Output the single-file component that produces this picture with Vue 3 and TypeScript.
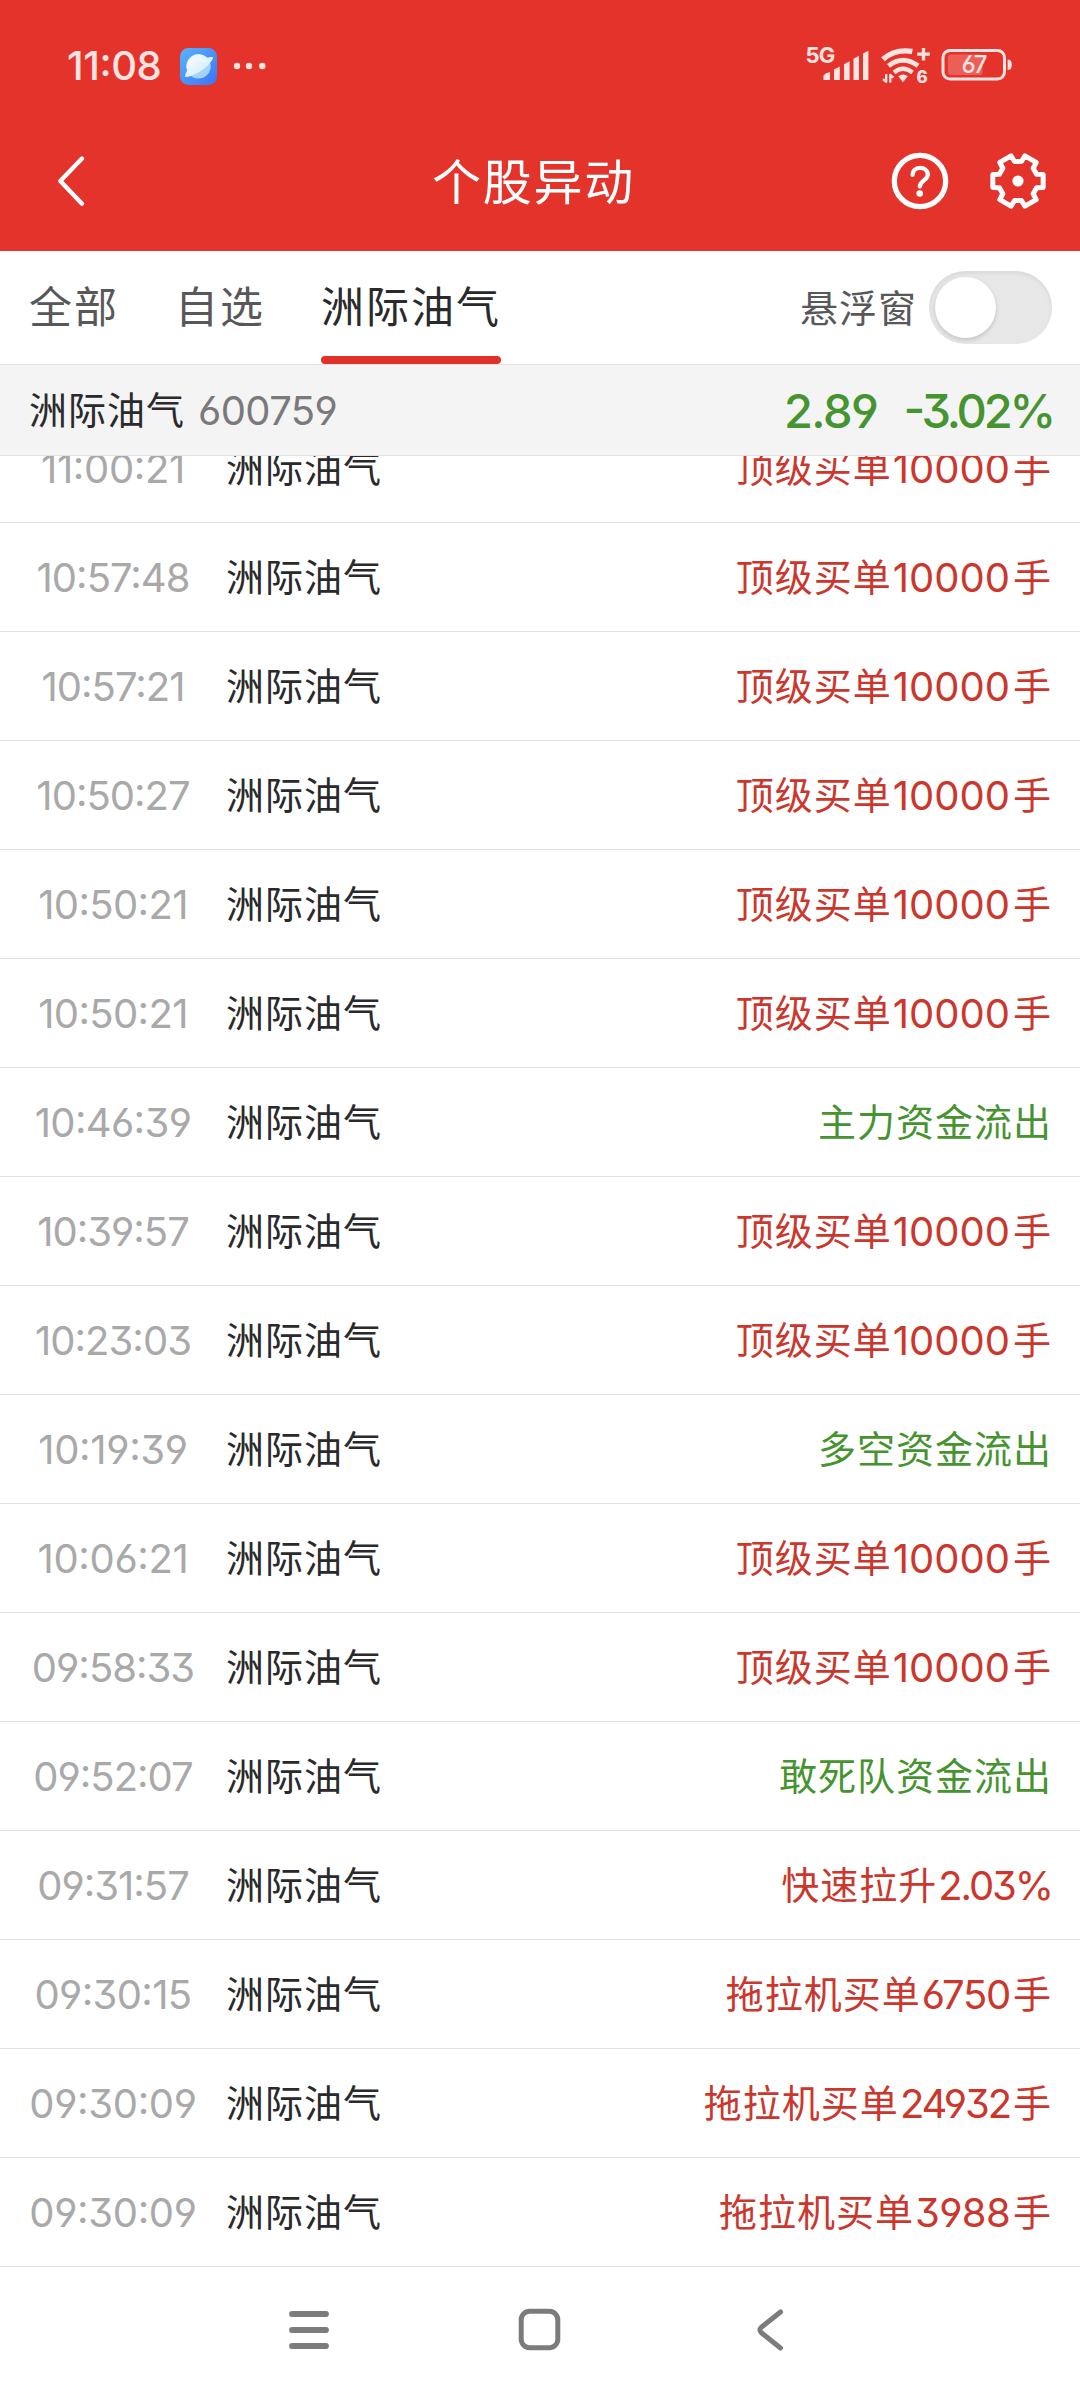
<script setup lang="ts">
type Tone = 'up' | 'down'

interface Alert {
  time: string
  text: string
  tone: Tone
}

interface Segment {
  text: string
  numeric: boolean
}

const stock = { name: '洲际油气', code: '600759', price: '2.89', change: '-3.02%' }

const tabs = ['全部', '自选', stock.name]
const activeTab = 2

const bigBuy = '顶级买单10000手'

const alerts: Alert[] = [
  { time: '11:00:21', text: bigBuy, tone: 'up' },
  { time: '10:57:48', text: bigBuy, tone: 'up' },
  { time: '10:57:21', text: bigBuy, tone: 'up' },
  { time: '10:50:27', text: bigBuy, tone: 'up' },
  { time: '10:50:21', text: bigBuy, tone: 'up' },
  { time: '10:50:21', text: bigBuy, tone: 'up' },
  { time: '10:46:39', text: '主力资金流出', tone: 'down' },
  { time: '10:39:57', text: bigBuy, tone: 'up' },
  { time: '10:23:03', text: bigBuy, tone: 'up' },
  { time: '10:19:39', text: '多空资金流出', tone: 'down' },
  { time: '10:06:21', text: bigBuy, tone: 'up' },
  { time: '09:58:33', text: bigBuy, tone: 'up' },
  { time: '09:52:07', text: '敢死队资金流出', tone: 'down' },
  { time: '09:31:57', text: '快速拉升2.03%', tone: 'up' },
  { time: '09:30:15', text: '拖拉机买单6750手', tone: 'up' },
  { time: '09:30:09', text: '拖拉机买单24932手', tone: 'up' },
  { time: '09:30:09', text: '拖拉机买单3988手', tone: 'up' },
]

// Figures are set slightly larger than the Chinese text around them.
function segments(text: string): Segment[] {
  return (text.match(/[\d.%]+|[^\d.%]+/g) ?? []).map((part) => ({
    text: part,
    numeric: /^[\d.%]/.test(part),
  }))
}

function tracking(text: string): string {
  const narrow = (text.match(/[23457.%]/g) ?? []).length
  return `${((-2.6 * narrow) / text.length).toFixed(2)}px`
}

// Six-toothed gear outline around (30, 30).
const gearPoints = Array.from({ length: 6 }, (_, i) => i * 60)
  .flatMap((deg) =>
    [
      [deg - 20, 19.8],
      [deg - 14.5, 26],
      [deg + 14.5, 26],
      [deg + 20, 19.8],
    ].map(([a, r]) => {
      const rad = (a * Math.PI) / 180
      return `${(30 + r * Math.cos(rad)).toFixed(2)},${(30 + r * Math.sin(rad)).toFixed(2)}`
    }),
  )
  .join(' ')
</script>

<template>
  <div class="screen">
    <header class="top">
      <div class="status">
        <div class="status-left">
          <span class="clock">11:08</span>
          <svg class="app-icon" viewBox="0 0 37 37">
            <defs>
              <linearGradient id="appBg" x1="0" y1="0" x2="1" y2="1">
                <stop offset="0" stop-color="#58b4fb" />
                <stop offset="1" stop-color="#3b74f8" />
              </linearGradient>
              <linearGradient id="planet" x1="0" y1="0" x2="1" y2="1">
                <stop offset="0" stop-color="#ffffff" />
                <stop offset="1" stop-color="#c6e8fd" />
              </linearGradient>
            </defs>
            <rect width="37" height="37" rx="8.5" fill="url(#appBg)" />
            <circle cx="18.5" cy="18.3" r="12.2" fill="#a4d3fc" />
            <path d="M5 28.8C5 27 5.8 25 7.2 22.6A12.2 12.2 0 0 1 27.2 9.8C30 9 32.2 8.9 33 9.4C33 12 28.5 17.5 20.5 23.3C13 28 7.5 29.5 5 28.8Z" fill="url(#planet)" />
          </svg>
          <svg class="dots" viewBox="0 0 34 8">
            <circle cx="4" cy="4" r="3.2" /><circle cx="16" cy="4" r="3.2" /><circle cx="29.3" cy="4" r="3.2" />
          </svg>
        </div>
        <div class="status-right">
          <svg class="signal" viewBox="0 0 66 40">
            <text x="-1.5" y="17.6" class="tag5g">5G</text>
            <path d="M16.5 35V30.5L19 28.200L23 27V35ZM27 35V24.500L32.800 21.500V35ZM37 35V19.200L42.600 16.200V35ZM46.500 35V13.800L52 10.800V35ZM56 35V8.500L61.400 5.800V35Z" />
          </svg>
          <svg class="wifi" viewBox="0 0 50 40">
            <g class="wave">
              <path d="M3 14.2Q15 3.6 32.3 6.5" stroke-width="5.4" />
              <path d="M8.5 20.8Q23 9.7 38 20.8" stroke-width="4.8" />
              <path d="M14 27.5Q23 20 32.5 27.5" stroke-width="4.4" />
              <path d="M43.5 3V15.4M37.2 9.2H49.800" stroke-width="3.300" />
              <path d="M6.200 29V36.800L3 34.200M10.300 37.500V30L13.500 32.600" stroke-width="2.300" />
            </g>
            <path d="M18.300 31.300Q23 27.500 27.800 31.300L23 37.300Z" />
            <text x="36.500" y="38.300" class="tag6">6</text>
          </svg>
          <svg class="battery" viewBox="0 0 72 34">
            <rect x="2" y="2.500" width="61.500" height="28.500" rx="7" class="shell" />
            <rect x="7" y="6.500" width="34.500" height="20.500" rx="2" opacity="0.250" />
            <path d="M66.600 11.500Q70.800 11.500 70.800 16.800T66.600 22Z" />
            <text x="33" y="25.300" text-anchor="middle" class="level">67</text>
          </svg>
        </div>
      </div>
      <div class="title-bar">
        <svg class="back" viewBox="0 0 30 54">
          <path d="M26 4.500L4.300 27L26 49.700" />
        </svg>
        <h1>个股异动</h1>
        <div class="actions">
          <svg viewBox="0 0 60 60">
            <circle cx="30" cy="30" r="25.700" class="line" stroke-width="5.300" />
            <path d="M22.600 23.800C22.800 14.500 37.800 14.800 37.800 23.800C37.800 29 29.800 29.800 29.800 35.500" class="line" stroke-width="4.300" />
            <circle cx="29.700" cy="42.500" r="3.300" />
          </svg>
          <svg viewBox="0 0 60 60">
            <polygon :points="gearPoints" class="line" stroke-width="5" />
            <circle cx="30" cy="30" r="5.600" />
          </svg>
        </div>
      </div>
    </header>

    <nav class="tabs">
      <span v-for="(tab, i) in tabs" :key="tab" class="tab" :class="{ active: i === activeTab }">{{ tab }}</span>
      <div class="float-toggle">
        <span class="float-label">悬浮窗</span>
        <div class="switch"><div class="knob"></div></div>
      </div>
    </nav>

    <section class="quote">
      <span class="quote-name">{{ stock.name }}</span>
      <span class="quote-code num">{{ stock.code }}</span>
      <span class="quote-price num">{{ stock.price }}</span>
      <span class="quote-change num">{{ stock.change }}</span>
    </section>

    <main class="list">
      <div v-for="(item, i) in alerts" :key="i" class="row">
        <span class="time num" :style="{ letterSpacing: tracking(item.time) }">{{ item.time }}</span>
        <span class="name">{{ stock.name }}</span>
        <span class="event" :class="item.tone">
          <template v-for="(part, j) in segments(item.text)" :key="j">
            <span v-if="part.numeric" class="num" :style="{ letterSpacing: tracking(part.text) }">{{ part.text }}</span>
            <span v-else class="han">{{ part.text }}</span>
          </template>
        </span>
      </div>
    </main>

    <footer class="nav">
      <svg viewBox="0 0 46 46"><path d="M6 7H40M6 23H40M6 39H40" stroke-width="5.800" /></svg>
      <svg viewBox="0 0 46 46"><rect x="4.200" y="4.200" width="36.600" height="36.600" rx="8.500" stroke-width="5" /></svg>
      <svg viewBox="0 0 46 46"><path d="M32.500 5L13.300 20.300Q10.500 23 13.300 25.700L32.500 41" stroke-width="5" /></svg>
    </footer>
  </div>
</template>

<style>
body {
  background: #fff;
}
</style>

<style scoped>
.screen {
  width: 1080px;
  height: 2400px;
  display: flex;
  flex-direction: column;
  overflow: hidden;
  background: #fff;
  font-family: 'Noto Sans CJK SC', sans-serif;
  color: #2a2a2c;
}
svg {
  display: block;
  flex: none;
  overflow: visible;
}
.num,
.clock {
  font-family: 'Inter', 'Noto Sans CJK SC', sans-serif;
  font-feature-settings: 'cv03', 'cv04', 'cv09', 'calt', 'case';
}
.top {
  height: 251px;
  flex: none;
  background: #e4332a;
}
.status {
  height: 111px;
  padding: 21px 67px 0 67px;
  box-sizing: border-box;
  display: flex;
  justify-content: space-between;
  align-items: center;
  fill: #ffe3e1;
}
.status-left,
.status-right {
  display: flex;
  align-items: center;
}
.status-right {
  margin-bottom: 2px;
}
.clock {
  width: 113px;
  font-size: 40px;
  line-height: 44px;
  font-weight: 500;
  letter-spacing: -0.4px;
  color: #ffe3e1;
}
.app-icon {
  width: 37px;
  height: 37px;
}
.dots {
  width: 34px;
  height: 8px;
  margin-left: 16px;
}
.signal {
  width: 66px;
  height: 40px;
}
.wifi {
  width: 50px;
  height: 40px;
  margin-left: 7px;
}
.wave {
  fill: none;
  stroke: #ffe3e1;
  stroke-linejoin: round;
}
.battery {
  width: 72px;
  height: 34px;
  margin-left: 11px;
}
.shell {
  fill: none;
  stroke: #ffe3e1;
  stroke-width: 3;
}
.tag5g {
  font: 700 22px 'Inter', sans-serif;
  letter-spacing: -0.7px;
}
.tag6 {
  font: 800 17px 'Inter', sans-serif;
}
.level {
  font: 500 24px 'Inter', sans-serif;
  font-feature-settings: 'cv03';
  letter-spacing: -1px;
}
.title-bar {
  height: 140px;
  padding: 0 32px 0 56px;
  display: flex;
  align-items: center;
  justify-content: space-between;
}
.back {
  width: 30px;
  height: 54px;
  fill: none;
  stroke: #fff;
  stroke-width: 4.4;
  stroke-linecap: round;
  stroke-linejoin: round;
}
h1 {
  margin: 0 0 5px 91px;
  font-size: 49px;
  line-height: 60px;
  font-weight: 400;
  letter-spacing: 1.8px;
  color: #fff;
}
.actions {
  display: flex;
  gap: 38px;
  fill: #fff;
}
.actions svg {
  width: 60px;
  height: 60px;
}
.line {
  fill: none;
  stroke: #fff;
  stroke-linecap: round;
  stroke-linejoin: round;
}
.tabs {
  height: 113px;
  flex: none;
  padding: 0 28px 0 29px;
  display: flex;
  align-items: stretch;
  gap: 56px;
}
.tab {
  display: flex;
  flex-direction: column;
  font-size: 43px;
  line-height: 105px;
  letter-spacing: 2px;
  padding-top: 1px;
  height: 112px;
  color: #58585a;
}
.tab.active {
  color: #2a2a2c;
}
.tab.active::after {
  content: '';
  height: 8px;
  flex: none;
  margin-top: -1px;
  border-radius: 4px;
  background: #e1322a;
}
.float-toggle {
  margin-left: auto;
  display: flex;
  align-items: center;
  gap: 12px;
  font-size: 38px;
  letter-spacing: 1px;
  color: #58585a;
}
.float-label,
.quote-name,
.name,
.han {
  padding-bottom: 5px;
}
.switch {
  width: 123px;
  height: 73px;
  padding: 6px;
  box-sizing: border-box;
  border-radius: 37px;
  background: #e7e7e7;
  box-shadow: inset 0 2px 4px rgba(0, 0, 0, 0.07);
}
.knob {
  width: 61px;
  height: 61px;
  border-radius: 50%;
  background: #fff;
  box-shadow: 0 2px 4px rgba(0, 0, 0, 0.16);
}
.quote {
  height: 92px;
  flex: none;
  box-sizing: border-box;
  padding: 0 27px 0 29px;
  display: flex;
  align-items: center;
  background: #f4f4f4;
  border-top: 1px solid #e2e2e2;
  border-bottom: 1px solid #e2e2e2;
}
.quote-name {
  font-size: 38px;
  letter-spacing: 1px;
}
.quote-code {
  margin-left: 13px;
  font-size: 40px;
  letter-spacing: -0.6px;
  color: #7a7a7c;
}
.quote-price,
.quote-change {
  font-size: 47px;
  font-weight: 500;
  color: #45942f;
}
.quote-price {
  margin-left: auto;
  letter-spacing: -1.5px;
}
.quote-change {
  margin-left: 26px;
  letter-spacing: -3.2px;
}
.list {
  height: 1811px;
  flex: none;
  overflow: hidden;
}
.row {
  height: 109px;
  box-sizing: border-box;
  padding-right: 28px;
  display: flex;
  align-items: center;
  border-bottom: 1px solid #e2e2e2;
  font-size: 38px;
  letter-spacing: 1px;
}
.row:first-child {
  margin-top: -42px;
}
.row .num {
  font-size: 40px;
}
.time {
  width: 226px;
  text-align: center;
  color: #a9a9a9;
}
.event {
  margin-left: auto;
  display: flex;
  align-items: center;
}
.event .num {
  margin-left: 1px;
}
.num + .han {
  margin-left: 3px;
}
.up {
  color: #cb372d;
}
.down {
  color: #45942f;
}
.nav {
  flex: 1;
  padding: 40px 286px 0;
  display: flex;
  justify-content: space-between;
  align-items: flex-start;
  fill: none;
  stroke: #7c7c7c;
  stroke-linecap: round;
  stroke-linejoin: round;
}
.nav svg {
  width: 46px;
  height: 46px;
}
</style>
